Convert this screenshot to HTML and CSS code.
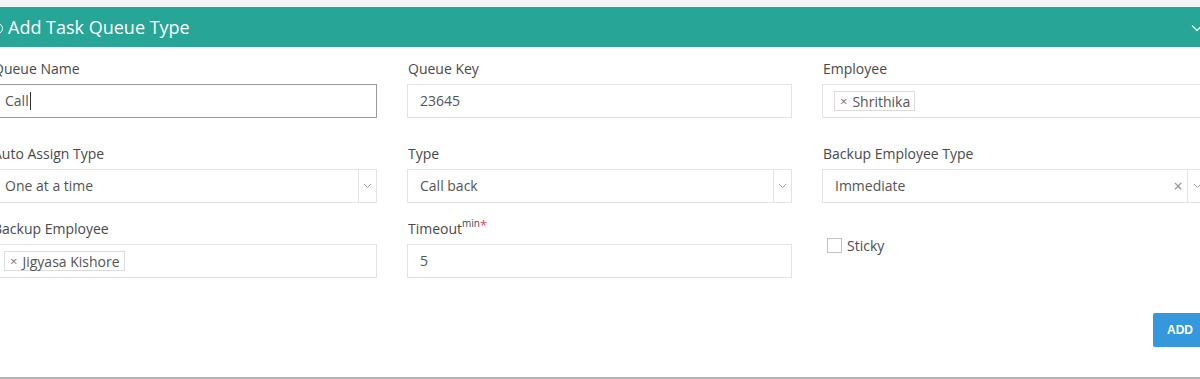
FILE: index.html
```html
<!DOCTYPE html>
<html>
<head>
<meta charset="utf-8">
<link rel="stylesheet" href="styles.css">
</head>
<body>
<div class="panel">
  <div class="panel-head">
    <span class="head-icon"></span>
    <span class="head-title">Add Task Queue Type</span>
    <svg class="head-chevron" width="12" height="8" viewBox="0 0 12 8"><path d="M1 1.5 L6 6.5 L11 1.5" fill="none" stroke="#d8f4f1" stroke-width="1.3"/></svg>
  </div>
  <div class="panel-body">
    <div class="grid">
      <div class="field">
        <div class="label">Queue Name</div>
        <div class="box box-focus"><span class="val">Call</span><span class="caret"></span></div>
      </div>
      <div class="field">
        <div class="label">Queue Key</div>
        <div class="box"><span class="val">23645</span></div>
      </div>
      <div class="field">
        <div class="label">Employee</div>
        <div class="box box-multi"><span class="tag"><span class="tag-x">×</span>Shrithika</span></div>
      </div>

      <div class="field row2">
        <div class="label">Auto Assign Type</div>
        <div class="box box-select"><span class="val sel-val">One at a time</span><span class="arrow"><svg width="9" height="6" viewBox="0 0 9 6"><path d="M1 1 L4.5 4.5 L8 1" fill="none" stroke="#a0a0a0" stroke-width="1"/></svg></span></div>
      </div>
      <div class="field row2">
        <div class="label">Type</div>
        <div class="box box-select"><span class="val sel-val">Call back</span><span class="arrow"><svg width="9" height="6" viewBox="0 0 9 6"><path d="M1 1 L4.5 4.5 L8 1" fill="none" stroke="#a0a0a0" stroke-width="1"/></svg></span></div>
      </div>
      <div class="field row2">
        <div class="label">Backup Employee Type</div>
        <div class="box box-select"><span class="val sel-val">Immediate</span><span class="clear">×</span><span class="arrow arrow-wide"><svg width="9" height="6" viewBox="0 0 9 6"><path d="M1 1 L4.5 4.5 L8 1" fill="none" stroke="#a0a0a0" stroke-width="1"/></svg></span></div>
      </div>

      <div class="field row3">
        <div class="label">Backup Employee</div>
        <div class="box box-multi"><span class="tag"><span class="tag-x">×</span>Jigyasa Kishore</span></div>
      </div>
      <div class="field row3">
        <div class="label">Timeout<sup class="sup">min</sup><span class="req">*</span></div>
        <div class="box"><span class="val">5</span></div>
      </div>
      <div class="field row3 sticky-cell">
        <label class="check"><span class="checkbox"></span>Sticky</label>
      </div>
    </div>
    <div class="actions">
      <button class="btn-add">ADD</button>
    </div>
  </div>
</div>
</body>
</html>
```

FILE: styles.css
```css
* { box-sizing: border-box; }
html, body { margin: 0; padding: 0; }
body {
  background: #f3f4f7;
  font-family: "Open Sans", "Noto Sans", sans-serif;
  color: #4d4d4d;
  overflow: hidden;
  height: 379px;
}
.panel {
  margin-top: 7px;
  margin-left: -23px;
  width: 1245px;
  background: #fff;
}
.panel-head {
  height: 40px;
  background: #27a597;
  display: flex;
  align-items: center;
  padding: 0 15px;
  color: #fff;
}
.head-icon {
  width: 11px;
  height: 11px;
  border: 1.5px solid #fff;
  border-radius: 50%;
  margin-right: 5px;
  margin-top: 2px;
}
.head-title {
  font-size: 18px;
  flex: 1;
  line-height: 24px;
}
.head-chevron {
  margin-right: 4px;
  margin-top: 2px;
}
.panel-body {
  padding: 13px 15px 30px;
  border-bottom: 2px solid #b4b4b4;
}
.grid {
  display: grid;
  grid-template-columns: 385px 385px 385px;
  column-gap: 30px;
}
.row2 { margin-top: 27px; }
.row3 { margin-top: 17px; }
.label {
  font-size: 14px;
  line-height: 18px;
  height: 18px;
  margin-bottom: 6px;
  padding-left: 1px;
  color: #4a4a4a;
}
.sup {
  font-size: 10px;
  line-height: 0;
  vertical-align: 7px;
}
.req {
  color: #e0435a;
  font-size: 13px;
  vertical-align: 4px;
  line-height: 0;
}
.box {
  height: 34px;
  border: 1px solid #e3e3e3;
  display: flex;
  align-items: center;
  padding-left: 12px;
  font-size: 14px;
  color: #555;
  background: #fff;
}
.box-focus { border-color: #9a9a9a; }
.val { line-height: 20px; }
.caret {
  width: 1px;
  height: 18px;
  background: #333;
  margin-left: 1px;
}
.box-select { padding-right: 0; }
.sel-val { flex: 1; }
.arrow {
  width: 18px;
  height: 32px;
  border-left: 1px solid #e3e3e3;
  display: flex;
  align-items: center;
  justify-content: center;
}
.arrow-wide { width: 19px; }
.clear {
  color: #8a8a8a;
  font-size: 16px;
  width: 18px;
  text-align: center;
  margin-right: 0;
}
.box-multi { padding-left: 11px; }
.tag {
  display: inline-flex;
  align-items: center;
  height: 20px;
  border: 1px solid #dcdcdc;
  padding: 0 4px 0 5px;
  font-size: 14px;
  color: #555;
  background: #fff;
}
.tag-x {
  color: #777;
  font-size: 13px;
  margin-right: 5px;
}
.sticky-cell {
  display: flex;
  align-items: flex-start;
  padding-top: 16px;
}
.check {
  display: flex;
  align-items: center;
  font-size: 14px;
  padding-left: 5px;
  color: #4d4d4d;
}
.checkbox {
  width: 15px;
  height: 15px;
  border: 1px solid #c4c4c4;
  background: #fff;
  margin-right: 5px;
}
.actions {
  display: flex;
  justify-content: flex-end;
  margin-top: 35px;
  width: 1215px;
}
.btn-add {
  height: 34px;
  width: 54px;
  border: none;
  background: #3598dc;
  color: #fff;
  font-family: "Liberation Sans", Arial, sans-serif;
  font-weight: bold;
  font-size: 12px;
  border-radius: 2px;
  padding: 0;
}
```
